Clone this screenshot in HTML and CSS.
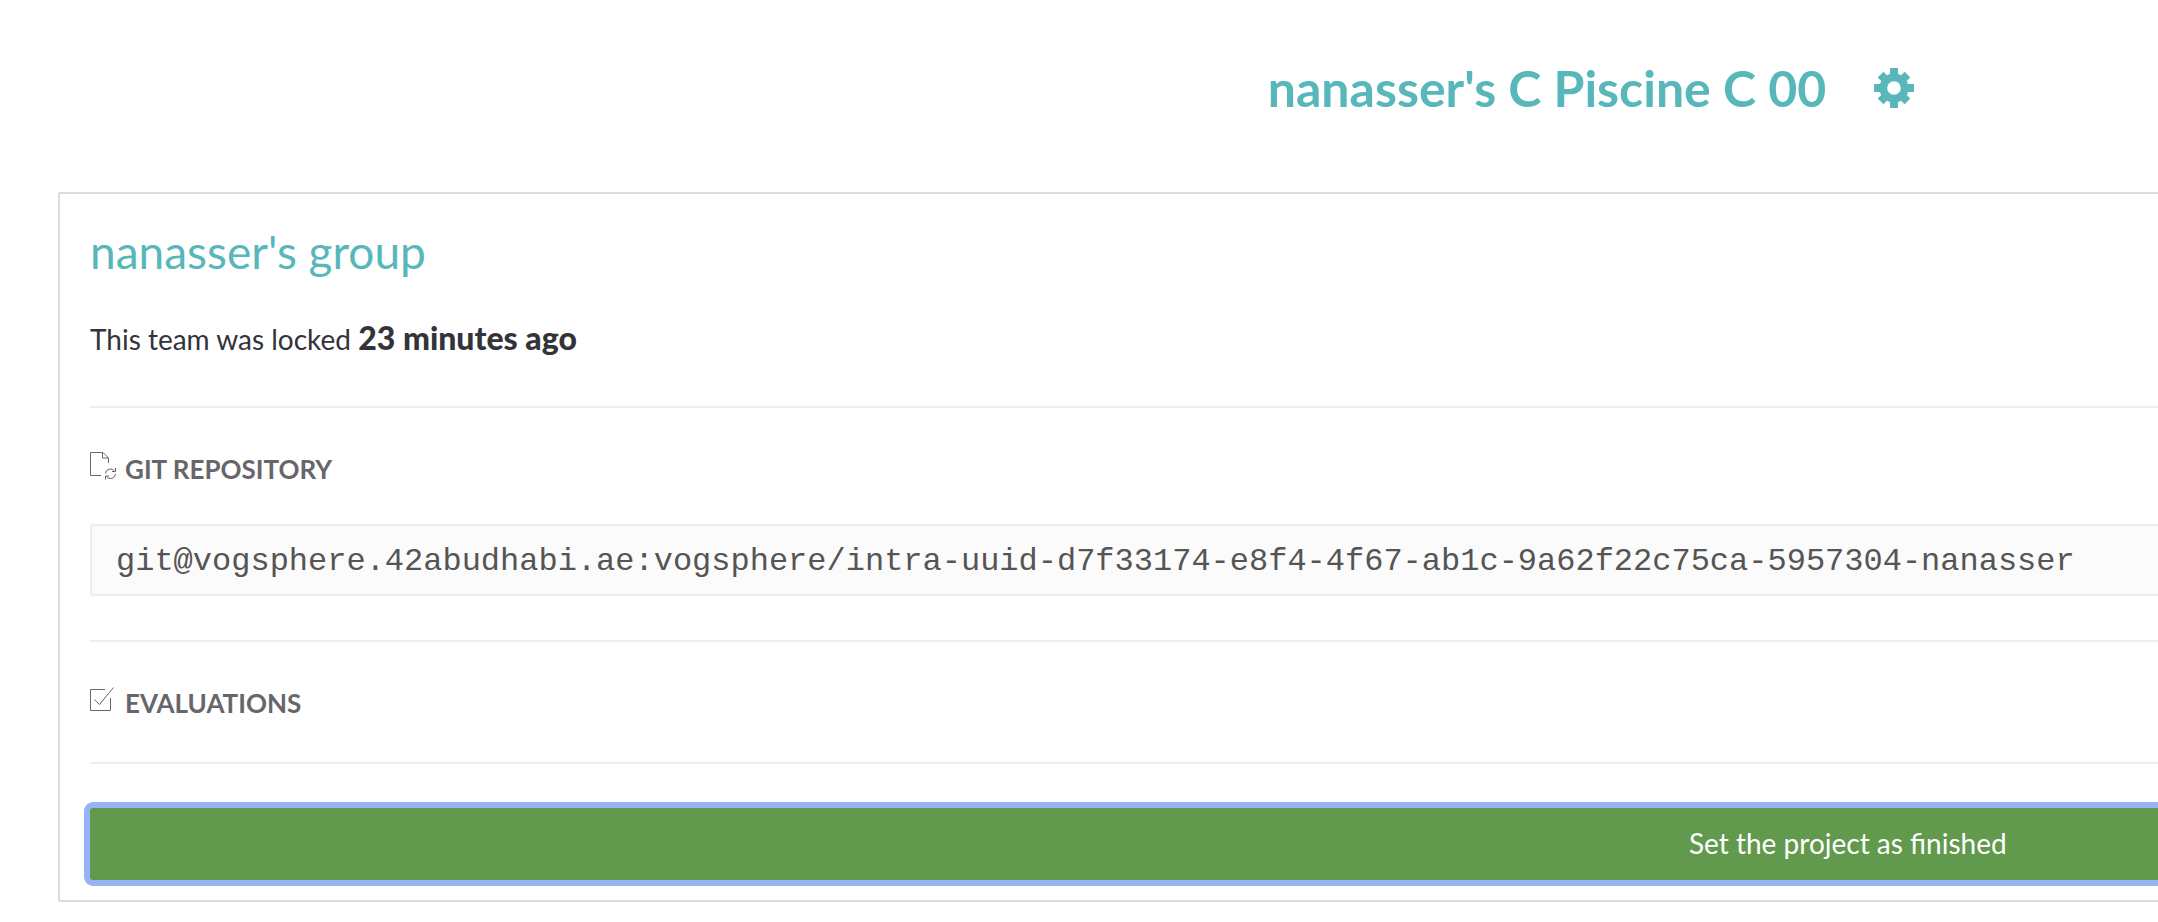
FILE: index.html
```html
<!DOCTYPE html>
<html lang="en">
<head>
<meta charset="utf-8">
<title>C Piscine C 00</title>
<link rel="stylesheet" href="styles.css">
</head>
<body>
<main class="page">
  <header class="page-header">
    <h1 class="page-title">nanasser's C Piscine C 00</h1>
    <button class="settings" type="button" aria-label="Project settings">
      <svg class="gear" viewBox="0 0 40 40" aria-hidden="true">
        <g fill="currentColor">
          <circle cx="20" cy="20" r="14.5"/>
          <rect x="16" y="0" width="8" height="40"/>
          <rect x="0" y="16" width="40" height="8"/>
          <rect x="16" y="1" width="8" height="38" transform="rotate(45 20 20)"/>
          <rect x="16" y="1" width="8" height="38" transform="rotate(-45 20 20)"/>
        </g>
        <circle cx="20" cy="20" r="6.8" fill="#fff"/>
      </svg>
    </button>
  </header>
  <section class="team">
    <h2 class="team-name">nanasser's group</h2>
    <p class="team-lock">This team was locked <strong>23 minutes ago</strong></p>
    <section class="block">
      <h3 class="block-title">
        <svg class="block-icon" viewBox="0 0 28 28" aria-hidden="true" fill="none" stroke="currentColor">
          <path d="M11 20.500H.5V-2.500H13L18.500 3V8M12.500-2.500V3H18"/>
          <path d="M15.500 18.500A5 5 0 0 1 24.500 16M25.500 13V16.500H22M25.500 19A5 5 0 0 1 16.500 21.500M15.500 24.500V21H19"/>
        </svg>
        GIT REPOSITORY
      </h3>
      <code class="repo">git@vogsphere.42abudhabi.ae:vogsphere/intra-uuid-d7f33174-e8f4-4f67-ab1c-9a62f22c75ca-5957304-nanasser</code>
    </section>
    <section class="block">
      <h3 class="block-title">
        <svg class="block-icon" viewBox="0 0 28 28" aria-hidden="true" fill="none" stroke="currentColor">
          <path d="M15 .5H.5V21.500H20.500V9"/>
          <path d="M4.500 10.500L9.500 15.500L23.500-1.500"/>
        </svg>
        EVALUATIONS
      </h3>
    </section>
    <section class="block">
      <button class="finish" type="button">Set the project as finished</button>
    </section>
  </section>
</main>
</body>
</html>
```
FILE: styles.css
```css
* { box-sizing: border-box; }

body {
  margin: 0;
  background: #fff;
  color: #33333a;
  font-family: Lato, "Open Sans", sans-serif;
  font-size: 28px;
  line-height: 40px;
}

.page {
  padding: 56px 0 20px 58px;
}

.page-header {
  display: flex;
  justify-content: center;
  align-items: center;
  gap: 48px;
  padding-left: 46%;
  color: #57b7bb;
}

.page-title {
  margin: 0;
  font-size: 50px;
  line-height: 64px;
  font-weight: 700;
}

.settings {
  display: flex;
  padding: 0;
  border: 0;
  background: none;
  color: inherit;
}

.gear {
  width: 40px;
  height: 40px;
}

.team {
  margin-top: 72px;
  padding: 28px 0 14px 30px;
  border: 2px solid #ddd;
  border-right: 0;
  border-radius: 2px 0 0 2px;
}

.team-name {
  margin: 0;
  color: #57b7bb;
  font-size: 46px;
  line-height: 60px;
  font-weight: 400;
}

.team-lock {
  margin: 36px 0 47px;
}

.team-lock strong {
  font-size: 32px;
  font-weight: 900;
}

.block {
  border-top: 2px solid #eee;
  padding: 46px 0 44px;
}

.block-title {
  display: flex;
  align-items: center;
  gap: 7px;
  margin: 0;
  color: #66666b;
  font-size: 26px;
  line-height: 30px;
  font-weight: 700;
}

.block-icon {
  width: 28px;
  height: 28px;
  overflow: visible;
}

.repo {
  display: block;
  margin-top: 40px;
  padding: 16px 0 12px 24px;
  border: 2px solid #eee;
  border-right: 0;
  border-radius: 3px 0 0 3px;
  background: #fbfbfb;
  color: #555;
  font-family: "Liberation Mono", monospace;
  font-size: 32px;
  line-height: 40px;
}

.block:last-child { padding: 38px 0 0; }

.finish {
  display: block;
  width: calc(100% + 6px);
  margin-left: -6px;
  padding: 15px 0 17px 70%;
  border: 6px solid #96b3f5;
  border-right: 0;
  border-radius: 9px 0 0 9px;
  background: #61994d;
  color: #fff;
  font: inherit;
}
```
